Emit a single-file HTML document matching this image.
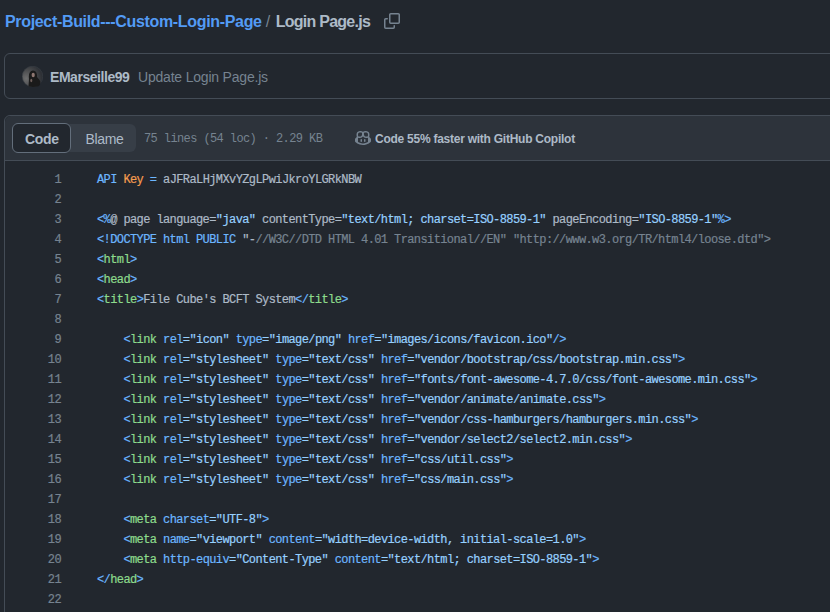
<!DOCTYPE html>
<html><head><meta charset="utf-8">
<style>
html,body{margin:0;padding:0;background:#22272e;width:830px;height:612px;overflow:hidden;}
body{font-family:"Liberation Sans",sans-serif;color:#adbac7;position:relative;}
.crumb{position:absolute;left:5px;top:11px;font-size:16px;letter-spacing:-0.33px;font-weight:bold;white-space:nowrap;line-height:22px;}
.crumb .repo{color:#539bf5;}
.crumb .sep{color:#768390;font-weight:normal;margin:0 6px 0 4px;}
.crumb .fn{letter-spacing:-0.75px;}
.copy{position:absolute;left:384px;top:13px;width:16px;height:16px;}
.commit{position:absolute;left:4px;top:53px;width:840px;height:44px;border:1px solid #444c56;border-radius:6px;}
.avatar{position:absolute;left:21.5px;top:66px;width:21px;height:21px;}
.author{position:absolute;left:50px;top:69px;font-size:14px;letter-spacing:-0.45px;font-weight:bold;line-height:16px;color:#adbac7;white-space:nowrap;}
.msg{position:absolute;left:138px;top:69px;font-size:14px;letter-spacing:-0.2px;line-height:16px;color:#768390;white-space:nowrap;}
.file{position:absolute;left:4px;top:115px;width:840px;height:520px;border:1px solid #444c56;border-radius:6px 0 0 0;}
.fhead{position:absolute;left:5px;top:116px;width:830px;height:44px;background:#2d333b;border-top-left-radius:6px;border-bottom:1px solid #444c56;}
.seg{position:absolute;left:12px;top:124px;width:124px;height:28px;background:#373e47;border-radius:6px;}
.segcode{position:absolute;left:12px;top:123px;width:57px;height:28px;background:#22272e;border:1px solid #636e7b;border-radius:6px;}
.segtxt{position:absolute;top:131px;font-size:14px;line-height:16px;color:#adbac7;white-space:nowrap;}
.meta{position:absolute;left:144px;top:131px;font-family:"Liberation Mono",monospace;font-size:12px;letter-spacing:-0.6px;line-height:16px;color:#768390;white-space:pre;}
.cop{position:absolute;left:355px;top:130px;width:16px;height:16px;}
.coptxt{position:absolute;left:375px;top:131px;font-size:12px;letter-spacing:-0.25px;font-weight:bold;line-height:16px;color:#adbac7;white-space:nowrap;}
.code{position:absolute;left:0;top:170px;font-family:"Liberation Mono",monospace;font-size:12px;letter-spacing:-0.6px;-webkit-text-stroke:0.2px;}
.ln{position:absolute;left:0;width:61px;text-align:right;color:#768390;height:20px;line-height:20px;white-space:pre;}
.lc{position:absolute;left:97px;height:20px;line-height:20px;white-space:pre;color:#adbac7;}
.c1{color:#6cb6ff}.s{color:#96d0ff}.ent{color:#8ddb8c}.v{color:#f69d50}.cm{color:#768390}
</style></head><body>
<div class="crumb"><span class="repo">Project-Build---Custom-Login-Page</span><span class="sep">/</span><span class="fn">Login Page.js</span></div>
<svg class="copy" viewBox="0 0 16 16" fill="#768390"><path d="M0 6.75C0 5.784.784 5 1.75 5h1.5a.75.75 0 0 1 0 1.5h-1.5a.25.25 0 0 0-.25.25v7.5c0 .138.112.25.25.25h7.5a.25.25 0 0 0 .25-.25v-1.5a.75.75 0 0 1 1.5 0v1.5A1.75 1.75 0 0 1 9.25 16h-7.5A1.75 1.75 0 0 1 0 14.25Z"/><path d="M5 1.75C5 .784 5.784 0 6.75 0h7.5C15.216 0 16 .784 16 1.75v7.5A1.75 1.75 0 0 1 14.25 11h-7.5A1.75 1.75 0 0 1 5 9.25Zm1.75-.25a.25.25 0 0 0-.25.25v7.5c0 .138.112.25.25.25h7.5a.25.25 0 0 0 .25-.25v-7.5a.25.25 0 0 0-.25-.25Z"/></svg>

<div class="commit"></div>
<svg class="avatar" viewBox="0 0 21 21"><defs><radialGradient id="ag" cx="0.2" cy="0.6" r="0.75"><stop offset="0" stop-color="#6e6e6e"/><stop offset="0.55" stop-color="#4a4b4d"/><stop offset="1" stop-color="#2e3136"/></radialGradient></defs><circle cx="10.5" cy="10.5" r="10.3" fill="url(#ag)" stroke="#3a3f46" stroke-width="0.6"/><path d="M6.5 20.5 L7 13 Q6 5 11 4.5 Q15.5 5 15 11 L17.5 14 Q19.5 17 17 20 Q12 21.5 6.5 20.5 Z" fill="#1a1a1a"/><ellipse cx="11.2" cy="9" rx="1.6" ry="2.3" fill="#8f7771"/><ellipse cx="9.3" cy="14.5" rx="1" ry="1.7" fill="#6f5f5b"/></svg>
<div class="author">EMarseille99</div>
<div class="msg">Update Login Page.js</div>

<div class="file"></div>
<div class="fhead"></div>
<div class="seg"></div>
<div class="segcode"></div>
<div class="segtxt" style="left:25px;font-weight:bold;letter-spacing:-0.35px">Code</div>
<div class="segtxt" style="left:85.5px;letter-spacing:-0.35px">Blame</div>
<div class="meta">75 lines (54 loc) · 2.29 KB</div>
<svg class="cop" viewBox="0 0 16 16" fill="#768390"><path d="M7.998 15.035c-4.562 0-7.873-2.914-7.998-3.749V9.338c.085-.628.677-1.686 1.588-2.065.013-.07.024-.143.036-.218.029-.183.06-.384.126-.612-.201-.508-.254-1.084-.254-1.656 0-.87.128-1.769.693-2.484.579-.733 1.494-1.124 2.724-1.261 1.206-.134 2.262.034 2.944.765.05.053.096.108.139.165.044-.057.094-.112.143-.165.682-.731 1.738-.899 2.944-.765 1.23.137 2.145.528 2.724 1.261.566.715.693 1.614.693 2.484 0 .572-.053 1.148-.254 1.656.066.228.098.429.126.612.012.076.024.148.037.218.924.385 1.522 1.471 1.591 2.095v1.872c0 .766-3.351 3.795-8.002 3.795Zm0-1.485c2.28 0 4.584-1.11 5.002-1.433V7.862l-.023-.116c-.49.21-1.075.291-1.727.291-1.146 0-2.059-.327-2.71-.991A3.222 3.222 0 0 1 8 6.303a3.24 3.24 0 0 1-.544.743c-.65.664-1.563.991-2.71.991-.652 0-1.236-.081-1.727-.291l-.023.116v4.255c.419.323 2.722 1.433 5.002 1.433ZM6.762 2.83c-.193-.206-.637-.413-1.682-.297-1.019.113-1.479.404-1.713.7-.247.312-.369.789-.369 1.554 0 .793.129 1.171.308 1.371.162.181.519.379 1.442.379.853 0 1.339-.235 1.638-.54.315-.322.527-.827.617-1.553.117-.935-.037-1.395-.241-1.614Zm4.155-.297c-1.044-.116-1.488.091-1.681.297-.204.219-.359.679-.242 1.614.091.726.303 1.231.618 1.553.299.305.784.54 1.638.54.922 0 1.28-.198 1.442-.379.179-.2.308-.578.308-1.371 0-.765-.123-1.242-.37-1.554-.233-.296-.693-.587-1.713-.7Z"/><path d="M6.25 9.037a.75.75 0 0 1 .75.75v1.501a.75.75 0 0 1-1.5 0V9.787a.75.75 0 0 1 .75-.75Zm4.25.75v1.501a.75.75 0 0 1-1.5 0V9.787a.75.75 0 0 1 1.5 0Z"/></svg>
<div class="coptxt">Code 55% faster with GitHub Copilot</div>

<div class="code">
<div class="ln" style="top:0px">1</div><div class="lc" style="top:0px"><span class="c1">API</span> <span class="v">Key</span> <span class="c1">=</span> aJFRaLHjMXvYZgLPwiJkroYLGRkNBW</div>
<div class="ln" style="top:20px">2</div><div class="lc" style="top:20px"></div>
<div class="ln" style="top:40px">3</div><div class="lc" style="top:40px"><span class="c1">&lt;%</span>@ page language=<span class="s">"java"</span> contentType=<span class="s">"text/html; charset=ISO-8859-1"</span> pageEncoding=<span class="s">"ISO-8859-1"</span><span class="c1">%&gt;</span></div>
<div class="ln" style="top:60px">4</div><div class="lc" style="top:60px"><span class="c1">&lt;!DOCTYPE html PUBLIC </span>"-<span class="cm">//W3C//DTD HTML 4.01 Transitional//EN" "http://www.w3.org/TR/html4/loose.dtd"&gt;</span></div>
<div class="ln" style="top:80px">5</div><div class="lc" style="top:80px"><span class="c1">&lt;</span><span class="ent">html</span><span class="c1">&gt;</span></div>
<div class="ln" style="top:100px">6</div><div class="lc" style="top:100px"><span class="c1">&lt;</span><span class="ent">head</span><span class="c1">&gt;</span></div>
<div class="ln" style="top:120px">7</div><div class="lc" style="top:120px"><span class="c1">&lt;</span><span class="ent">title</span><span class="c1">&gt;</span>File Cube's BCFT System<span class="c1">&lt;/</span><span class="ent">title</span><span class="c1">&gt;</span></div>
<div class="ln" style="top:140px">8</div><div class="lc" style="top:140px"></div>
<div class="ln" style="top:160px">9</div><div class="lc" style="top:160px">    <span class="c1">&lt;</span><span class="ent">link</span> <span class="c1">rel</span><span class="s">="icon"</span> <span class="c1">type</span><span class="s">="image/png"</span> <span class="c1">href</span><span class="s">="images/icons/favicon.ico"</span><span class="c1">/&gt;</span></div>
<div class="ln" style="top:180px">10</div><div class="lc" style="top:180px">    <span class="c1">&lt;</span><span class="ent">link</span> <span class="c1">rel</span><span class="s">="stylesheet"</span> <span class="c1">type</span><span class="s">="text/css"</span> <span class="c1">href</span><span class="s">="vendor/bootstrap/css/bootstrap.min.css"</span><span class="c1">&gt;</span></div>
<div class="ln" style="top:200px">11</div><div class="lc" style="top:200px">    <span class="c1">&lt;</span><span class="ent">link</span> <span class="c1">rel</span><span class="s">="stylesheet"</span> <span class="c1">type</span><span class="s">="text/css"</span> <span class="c1">href</span><span class="s">="fonts/font-awesome-4.7.0/css/font-awesome.min.css"</span><span class="c1">&gt;</span></div>
<div class="ln" style="top:220px">12</div><div class="lc" style="top:220px">    <span class="c1">&lt;</span><span class="ent">link</span> <span class="c1">rel</span><span class="s">="stylesheet"</span> <span class="c1">type</span><span class="s">="text/css"</span> <span class="c1">href</span><span class="s">="vendor/animate/animate.css"</span><span class="c1">&gt;</span></div>
<div class="ln" style="top:240px">13</div><div class="lc" style="top:240px">    <span class="c1">&lt;</span><span class="ent">link</span> <span class="c1">rel</span><span class="s">="stylesheet"</span> <span class="c1">type</span><span class="s">="text/css"</span> <span class="c1">href</span><span class="s">="vendor/css-hamburgers/hamburgers.min.css"</span><span class="c1">&gt;</span></div>
<div class="ln" style="top:260px">14</div><div class="lc" style="top:260px">    <span class="c1">&lt;</span><span class="ent">link</span> <span class="c1">rel</span><span class="s">="stylesheet"</span> <span class="c1">type</span><span class="s">="text/css"</span> <span class="c1">href</span><span class="s">="vendor/select2/select2.min.css"</span><span class="c1">&gt;</span></div>
<div class="ln" style="top:280px">15</div><div class="lc" style="top:280px">    <span class="c1">&lt;</span><span class="ent">link</span> <span class="c1">rel</span><span class="s">="stylesheet"</span> <span class="c1">type</span><span class="s">="text/css"</span> <span class="c1">href</span><span class="s">="css/util.css"</span><span class="c1">&gt;</span></div>
<div class="ln" style="top:300px">16</div><div class="lc" style="top:300px">    <span class="c1">&lt;</span><span class="ent">link</span> <span class="c1">rel</span><span class="s">="stylesheet"</span> <span class="c1">type</span><span class="s">="text/css"</span> <span class="c1">href</span><span class="s">="css/main.css"</span><span class="c1">&gt;</span></div>
<div class="ln" style="top:320px">17</div><div class="lc" style="top:320px"></div>
<div class="ln" style="top:340px">18</div><div class="lc" style="top:340px">    <span class="c1">&lt;</span><span class="ent">meta</span> <span class="c1">charset</span><span class="s">="UTF-8"</span><span class="c1">&gt;</span></div>
<div class="ln" style="top:360px">19</div><div class="lc" style="top:360px">    <span class="c1">&lt;</span><span class="ent">meta</span> <span class="c1">name</span><span class="s">="viewport"</span> <span class="c1">content</span><span class="s">="width=device-width, initial-scale=1.0"</span><span class="c1">&gt;</span></div>
<div class="ln" style="top:380px">20</div><div class="lc" style="top:380px">    <span class="c1">&lt;</span><span class="ent">meta</span> <span class="c1">http-equiv</span><span class="s">="Content-Type"</span> <span class="c1">content</span><span class="s">="text/html; charset=ISO-8859-1"</span><span class="c1">&gt;</span></div>
<div class="ln" style="top:400px">21</div><div class="lc" style="top:400px"><span class="c1">&lt;/</span><span class="ent">head</span><span class="c1">&gt;</span></div>
<div class="ln" style="top:420px">22</div><div class="lc" style="top:420px"></div>
<div class="ln" style="top:440px">23</div><div class="lc" style="top:440px"></div>
</div>
</body></html>
